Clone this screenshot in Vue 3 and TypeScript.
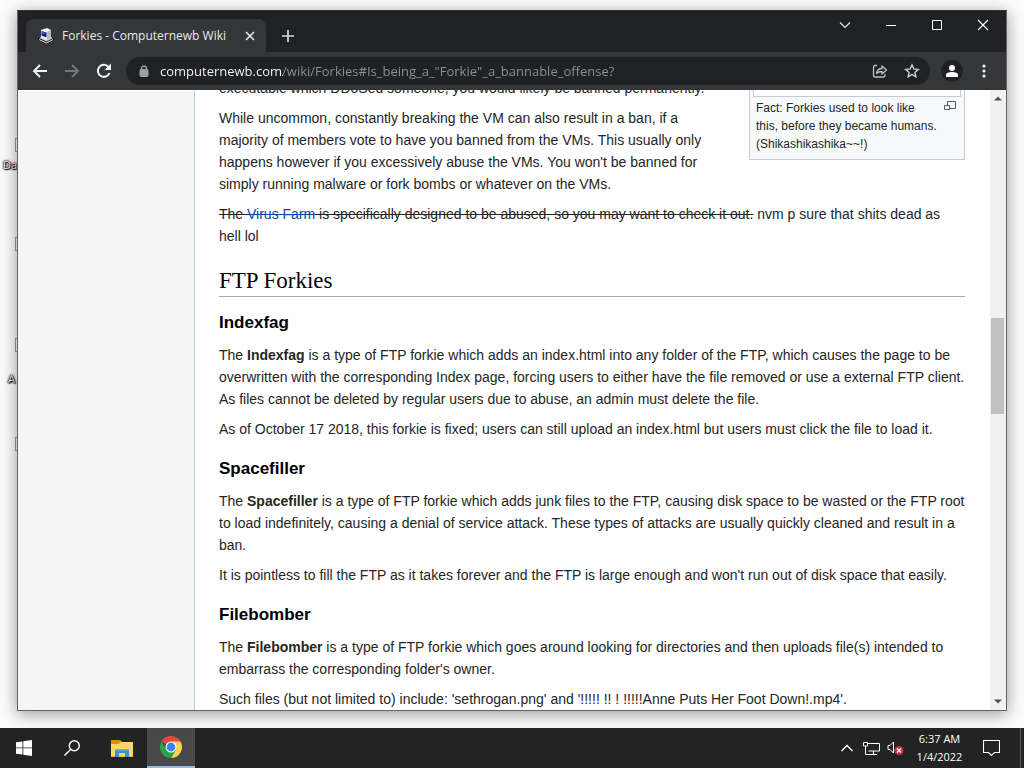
<script setup lang="ts">
import { ref } from 'vue'

const address = ref('computernewb.com/wiki/Forkies#Is_being_a_"Forkie"_a_bannable_offense?')

interface Shortcut {
  id: string
  label: string
}

const shortcuts: Shortcut[] = [
  { id: 'one', label: 'Da' },
  { id: 'two', label: '' },
  { id: 'three', label: 'A' },
  { id: 'four', label: '' },
]
</script>

<template>
  <div class="screen">
    <main class="desktop">
      <div v-for="s in shortcuts" :key="s.id" class="shortcut" :class="s.id">
        <i class="shortcut-icon"></i>
        <span v-if="s.label" class="shortcut-label">{{ s.label }}</span>
      </div>

      <section class="window" aria-label="Browser">
        <header class="titlebar">
          <div class="tab">
            <svg class="favicon" viewBox="0 0 16 16" aria-hidden="true">
              <path d="M0 10l4-2h8l4 2v2l-7 4-9-4z" fill="#111" />
              <path d="M1 10l3-1.500h8l3 1.500-6.500 3.500z" fill="#c9c9c9" />
              <path d="M1 11l7.500 3.500L15 11v1l-6.500 3.500L1 12z" fill="#f2f2f2" />
              <path d="M3 2l6-2 4 2v7l-5 3-5-3z" fill="#f4f4f4" />
              <path d="M9 3.500L13 2v7l-4 3z" fill="#b9b9c0" />
              <path d="M3.500 3l5 1.500v5L3.500 7.500z" fill="#15158c" />
              <path d="M4.500 4l2 .7v1.300l-2-.7z" fill="#79a8ff" />
            </svg>
            <span class="tab-title">Forkies - Computernewb Wiki</span>
            <button class="tab-close" aria-label="Close tab">
              <svg width="10" height="10" viewBox="0 0 10 10"><path d="M1 1l8 8M9 1l-8 8" stroke="#e8eaed" stroke-width="1.6" /></svg>
            </button>
          </div>
          <button class="new-tab" aria-label="New tab">
            <svg width="14" height="14" viewBox="0 0 14 14"><path d="M7 1v12M1 7h12" stroke="#d5d7da" stroke-width="1.7" /></svg>
          </button>
          <div class="caption-buttons">
            <button aria-label="Search tabs"><svg width="12" height="12" viewBox="0 0 12 12"><path d="M1 3.500l5 5 5-5" fill="none" stroke="#e4e4e6" stroke-width="1.200" /></svg></button>
            <button aria-label="Minimize"><svg width="12" height="12" viewBox="0 0 12 12"><path d="M1 6.500h10" stroke="#fff" /></svg></button>
            <button aria-label="Maximize"><svg width="12" height="12" viewBox="0 0 12 12"><path d="M1.500 1.500h9v9h-9z" fill="none" stroke="#fff" /></svg></button>
            <button aria-label="Close"><svg width="12" height="12" viewBox="0 0 12 12"><path d="M1 1l10 10M11 1L1 11" stroke="#fff" stroke-width="1.200" /></svg></button>
          </div>
        </header>

        <nav class="toolbar" aria-label="Navigation">
          <button class="tool" aria-label="Back"><svg width="16" height="16" viewBox="0 0 16 16"><path d="M15 8H2M8 2L2 8l6 6" fill="none" stroke="#f1f3f4" stroke-width="1.900" /></svg></button>
          <button class="tool" aria-label="Forward"><svg width="16" height="16" viewBox="0 0 16 16"><path d="M1 8h13M8 2l6 6-6 6" fill="none" stroke="#75777b" stroke-width="1.900" /></svg></button>
          <button class="tool" aria-label="Reload"><svg width="16" height="16" viewBox="0 0 16 16"><path d="M13.500 10A6 6 0 1 1 12.500 4" fill="none" stroke="#f1f3f4" stroke-width="2" /><path d="M15 0.500V7H8.500z" fill="#f1f3f4" /></svg></button>
          <div class="omnibox">
            <svg class="lock" width="10" height="13" viewBox="0 0 10 13" aria-hidden="true"><path d="M2.500 5V3.500a2.500 2.500 0 0 1 5 0V5" fill="none" stroke="#9aa0a6" stroke-width="1.400" /><rect x="1" y="4.500" width="8" height="7" rx="1" fill="#9aa0a6" stroke="#9aa0a6" /></svg>
            <input v-model="address" class="address" type="text" aria-label="Address and search bar" spellcheck="false" />
            <button class="box-tool" aria-label="Share this page">
              <svg width="16" height="16" viewBox="0 0 16 16" fill="none" stroke="#bdc1c6" stroke-width="1.300"><path d="M5 2.500H3a1.500 1.500 0 0 0-1.500 1.500v8.500A1.500 1.500 0 0 0 3 14h8.500a1.500 1.500 0 0 0 1.500-1.500V11" /><path d="M4.500 10.500c.4-3 2-5 5.500-5V3l4.500 4-4.500 4V8.500c-2.500 0-4 .5-5.500 2z" stroke-linejoin="round" /></svg>
            </button>
            <button class="box-tool" aria-label="Bookmark this page">
              <svg width="16" height="16" viewBox="0 0 16 16"><path d="M8 1.800l1.800 4.200 4.500.4-3.400 3 1 4.500L8 11.500l-3.900 2.400 1-4.500-3.400-3 4.500-.4z" fill="none" stroke="#d5d7da" stroke-width="1.300" /></svg>
            </button>
          </div>
          <button class="profile" aria-label="Profile">
            <svg width="12" height="12" viewBox="0 0 12 12" fill="#fff"><circle cx="6" cy="3" r="3" /><path d="M0 12V9.800C0 8 3 7 6 7s6 1 6 2.800V12z" /></svg>
          </button>
          <button class="menu" aria-label="Menu">
            <svg width="4" height="14" viewBox="0 0 4 14" fill="#f1f3f4"><circle cx="2" cy="2" r="1.600" /><circle cx="2" cy="7" r="1.600" /><circle cx="2" cy="12" r="1.600" /></svg>
          </button>
        </nav>

        <div class="page">
          <aside class="sidebar"></aside>
          <article class="article">
            <figure class="thumb">
              <div class="thumb-image"></div>
              <figcaption>
                <a class="enlarge" href="#enlarge" aria-label="Enlarge">
                  <svg width="12" height="10" viewBox="0 0 12 10" fill="none" stroke="#54595d"><path d="M3.500 4.500V.5h8v7H5" /><path d="M.5 4.500h5v4h-5z" /></svg>
                </a>
                Fact: Forkies used to look like this, before they became humans. (Shikashikashika~~!)
              </figcaption>
            </figure>
            <p>executable which DDoSed someone, you would likely be banned permanently.</p>
            <p>While uncommon, constantly breaking the VM can also result in a ban, if a majority of members vote to have you banned from the VMs. This usually only happens however if you excessively abuse the VMs. You won't be banned for simply running malware or fork bombs or whatever on the VMs.</p>
            <p><s>The <a href="#virus-farm">Virus Farm</a> is specifically designed to be abused, so you may want to check it out.</s> nvm p sure that shits dead as hell lol</p>
            <h2>FTP Forkies</h2>
            <h3>Indexfag</h3>
            <p>The <b>Indexfag</b> is a type of FTP forkie which adds an index.html into any folder of the FTP, which causes the page to be overwritten with the corresponding Index page, forcing users to either have the file removed or use a external FTP client. As files cannot be deleted by regular users due to abuse, an admin must delete the file.</p>
            <p>As of October 17 2018, this forkie is fixed; users can still upload an index.html but users must click the file to load it.</p>
            <h3>Spacefiller</h3>
            <p>The <b>Spacefiller</b> is a type of FTP forkie which adds junk files to the FTP, causing disk space to be wasted or the FTP root to load indefinitely, causing a denial of service attack. These types of attacks are usually quickly cleaned and result in a ban.</p>
            <p>It is pointless to fill the FTP as it takes forever and the FTP is large enough and won't run out of disk space that easily.</p>
            <h3>Filebomber</h3>
            <p>The <b>Filebomber</b> is a type of FTP forkie which goes around looking for directories and then uploads file(s) intended to embarrass the corresponding folder's owner.</p>
            <p>Such files (but not limited to) include: 'sethrogan.png' and '!!!!! !! ! !!!!!Anne Puts Her Foot Down!.mp4'.</p>
          </article>
          <div class="scrollbar">
            <button aria-label="Scroll up"><svg width="8" height="5" viewBox="0 0 8 5"><path d="M0 4.500L4 .5l4 4z" fill="#505050" /></svg></button>
            <div class="track">
              <div class="before"></div>
              <div class="handle"></div>
              <div class="after"></div>
            </div>
            <button aria-label="Scroll down"><svg width="8" height="5" viewBox="0 0 8 5"><path d="M0 .5l4 4 4-4z" fill="#505050" /></svg></button>
          </div>
        </div>
      </section>
    </main>

    <footer class="taskbar">
      <button class="task" aria-label="Start">
        <svg width="16" height="16" viewBox="0 0 16 16" fill="#fff"><path d="M0 2.300L6.500 1.400V7.500H0zM7.300 1.300L16 0V7.500H7.300zM0 8.300H6.500V14.500L0 13.700zM7.300 8.300H16V16L7.300 14.700z" /></svg>
      </button>
      <button class="task" aria-label="Search">
        <svg width="16" height="16" viewBox="0 0 16 16" fill="none" stroke="#fff" stroke-width="1.400"><circle cx="10.300" cy="5.700" r="5" /><path d="M6.800 9.200L.5 15.500" /></svg>
      </button>
      <button class="task" aria-label="File Explorer">
        <svg width="22" height="19" viewBox="0 0 22 19"><path d="M0 1h9l2 2h11v15H0z" fill="#f0b429" /><path d="M0 1h9l1 2-2 2H0z" fill="#dc8f1c" /><path d="M0 5h8l2-2h12v14H0z" fill="#ffd567" /><path d="M4 10h14v8h-4v-4H8v4H4z" fill="#3f8fce" /><path d="M4 10h14v1.500H4z" fill="#69aede" /></svg>
      </button>
      <button class="task active" aria-label="Google Chrome">
        <svg width="24" height="24" viewBox="0 0 24 24"><path d="M12 12L2.470 6.500A11 11 0 0 1 21.530 6.500z" fill="#df4a3d" /><path d="M12 6.500h9.530A11 11 0 0 1 12 23l4.760-8.250z" fill="#fdd14d" /><path d="M7.240 14.750L2.470 6.500A11 11 0 0 0 12 23l4.760-8.250z" fill="#2ba24c" /><circle cx="12" cy="12" r="5.500" fill="#fff" /><circle cx="12" cy="12" r="4.400" fill="#3f82ee" /></svg>
      </button>
      <div class="tray">
        <button class="tray-item" aria-label="Show hidden icons"><svg width="12" height="8" viewBox="0 0 12 8"><path d="M.5 7L6 1.500 11.500 7" fill="none" stroke="#fff" stroke-width="1.300" /></svg></button>
        <button class="tray-item" aria-label="Network"><svg width="17" height="14" viewBox="0 0 17 14" fill="none" stroke="#fff"><path d="M5 2.500h11.500v7.500H5.500M10.500 10v3M6 13.500h8M2.500 5v8.500H6" /><path d="M.5 1.500h4v3.500h-4z" /></svg></button>
        <button class="tray-item" aria-label="Volume"><svg width="17" height="14" viewBox="0 0 17 14"><path d="M1 4.500h2L6.500 1v11L3 8.500H1z" fill="none" stroke="#fff" /><circle cx="12" cy="9.500" r="4.500" fill="#c8324a" /><path d="M10 7.500l4 4M14 7.500l-4 4" stroke="#fff" stroke-width="1.200" /></svg></button>
        <button class="clock"><span>6:37 AM</span><span>1/4/2022</span></button>
        <button class="tray-note" aria-label="Notifications"><svg width="17" height="16" viewBox="0 0 17 16"><path d="M.5.5h16v12h-5l-3 3-3-3h-5z" fill="none" stroke="#fff" stroke-width="1.100" /></svg></button>
        <button class="show-desktop" aria-label="Show desktop"></button>
      </div>
    </footer>
  </div>
</template>

<style>
html,
body {
  margin: 0;
}
</style>

<style scoped>
.screen {
  display: flex;
  flex-direction: column;
  height: 100vh;
  overflow: hidden;
  font-family: "Open Sans", "Noto Sans", sans-serif;
}
.screen * {
  box-sizing: border-box;
}
button {
  display: flex;
  align-items: center;
  justify-content: center;
  padding: 0;
  border: 0;
  background: none;
  color: #fff;
  font: inherit;
}
.desktop {
  position: relative;
  display: flex;
  flex: 1;
  min-height: 0;
  padding: 10px 17px 17px;
  background: #fcfcfc;
}
.shortcut {
  position: absolute;
  left: 2px;
  width: 40px;
  height: 36px;
}
.one { top: 138px; }
.two { top: 237px; }
.three { top: 338px; }
.four { top: 437px; }
.shortcut-icon {
  position: absolute;
  top: 0;
  left: 13px;
  width: 20px;
  height: 14px;
  border: 1px solid #999;
}
.shortcut-label {
  position: absolute;
  top: 18px;
  left: 1px;
  color: #fff;
  font-size: 11px;
  line-height: 18px;
  text-shadow: 0 0 1px #000, 0 0 2px #000, 1px 1px 1px #000, 0 0 3px #000;
}
.three .shortcut-label {
  top: 32px;
  left: 6px;
}
.window {
  position: relative;
  display: flex;
  flex: 1;
  flex-direction: column;
  min-width: 0;
  border: 1px solid #646464;
  border-top-color: #303134;
  background: #fff;
  box-shadow: 0 3px 16px rgba(0, 0, 0, 0.4);
}
.titlebar {
  display: flex;
  flex: none;
  align-items: flex-end;
  height: 41px;
  padding-left: 8px;
  background: #202124;
}
.tab {
  display: flex;
  align-items: center;
  width: 240px;
  height: 33px;
  padding: 0 10px 0 12px;
  border-radius: 8px 8px 0 0;
  background: #35363a;
}
.favicon {
  width: 16px;
  height: 16px;
}
.tab-title {
  flex: 1;
  padding-left: 8px;
  color: #e8eaed;
  font-size: 12px;
  line-height: 16px;
  white-space: nowrap;
}
.tab-close {
  width: 12px;
  height: 16px;
}
.new-tab {
  width: 28px;
  height: 32px;
  margin-left: 8px;
}
.caption-buttons {
  display: flex;
  align-self: flex-start;
  margin-left: auto;
}
.caption-buttons button {
  width: 46px;
  height: 28px;
}
.toolbar {
  display: flex;
  flex: none;
  align-items: center;
  height: 38px;
  padding: 0 14px 0 6px;
  background: #35363a;
}
.tool {
  width: 32px;
  height: 32px;
}
.omnibox {
  display: flex;
  flex: 1;
  align-items: center;
  min-width: 0;
  height: 28px;
  margin-left: 6px;
  padding: 0 2px 0 13px;
  border-radius: 14px;
  background: #202124;
}
.address {
  flex: 1;
  min-width: 0;
  height: 28px;
  padding: 0 0 0 11px;
  border: 0;
  outline: 0;
  background: linear-gradient(90deg, #fff 134px, #8f9398 134px) text;
  color: transparent;
  font-family: inherit;
  font-size: 13px;
}
.box-tool {
  width: 32px;
  height: 28px;
}
.profile {
  width: 22px;
  height: 22px;
  margin-left: 11px;
  border-radius: 50%;
  background: #202124;
}
.menu {
  width: 16px;
  height: 28px;
  margin-left: 13px;
}
.page {
  display: flex;
  flex: 1;
  min-height: 0;
  overflow: hidden;
}
.sidebar {
  flex: none;
  width: 177px;
  border-top: 1px solid #fff;
  border-right: 1px solid #b8cbd8;
  background: #f5f5f5;
}
.article {
  flex: 1;
  min-width: 0;
  margin-top: -13px;
  padding: 0 25px 0 24px;
  color: #252525;
  font-family: "Liberation Sans", Arial, sans-serif;
  font-size: 14px;
  line-height: 22px;
}
.article p {
  margin: 0 0 8px;
}
.article a {
  color: #0645ad;
  text-decoration: none;
}
.article s a {
  text-decoration: line-through;
}
.article h2 {
  margin: 20px 0 0;
  padding-bottom: 1px;
  border-bottom: 1px solid #a2a9b1;
  color: #000;
  font-family: Georgia, "Liberation Serif", serif;
  font-size: 23px;
  font-weight: 400;
  line-height: 28px;
}
.article h3 {
  margin: 16px 0 8px;
  color: #000;
  font-size: 17px;
  line-height: 26px;
}
.article h2 + h3 {
  margin-top: 13px;
}
.thumb {
  float: right;
  width: 216px;
  margin: 0 0 8px 20px;
  padding: 0 3px;
  border: 1px solid #c8ccd1;
  background: #f8f9fa;
}
.thumb-image {
  height: 19px;
  border: 1px solid #c8ccd1;
  background: #fff;
}
.thumb figcaption {
  padding: 2px 3px 6px;
  font-size: 12px;
  line-height: 18px;
}
.enlarge {
  display: flex;
  float: right;
  padding: 2px 2px 0 24px;
}
.scrollbar {
  display: flex;
  flex: none;
  flex-direction: column;
  width: 16px;
  background: #f1f1f1;
}
.scrollbar button {
  flex: none;
  height: 17px;
}
.track {
  display: flex;
  flex: 1;
  flex-direction: column;
  padding: 0 2px 0 1px;
}
.before {
  flex: 211;
}
.handle {
  flex: 96;
  background: #c1c1c1;
}
.after {
  flex: 279;
}
.taskbar {
  display: flex;
  flex: none;
  height: 40px;
  background: #232323;
}
.task {
  width: 48px;
  height: 40px;
}
.task:nth-child(n + 3) {
  margin-left: 2px;
}
.task.active {
  margin-left: 1px;
  border-bottom: 2px solid #8fbcea;
  background: #484848;
}
.tray {
  display: flex;
  margin-left: auto;
}
.tray-item {
  width: 24px;
}
.clock {
  flex-direction: column;
  width: 65px;
  font-size: 11px;
  line-height: 18px;
}
.tray-note {
  width: 38px;
}
.show-desktop {
  width: 4px;
  margin-left: 10px;
  border-left: 1px solid #5d5d5d;
}
</style>
